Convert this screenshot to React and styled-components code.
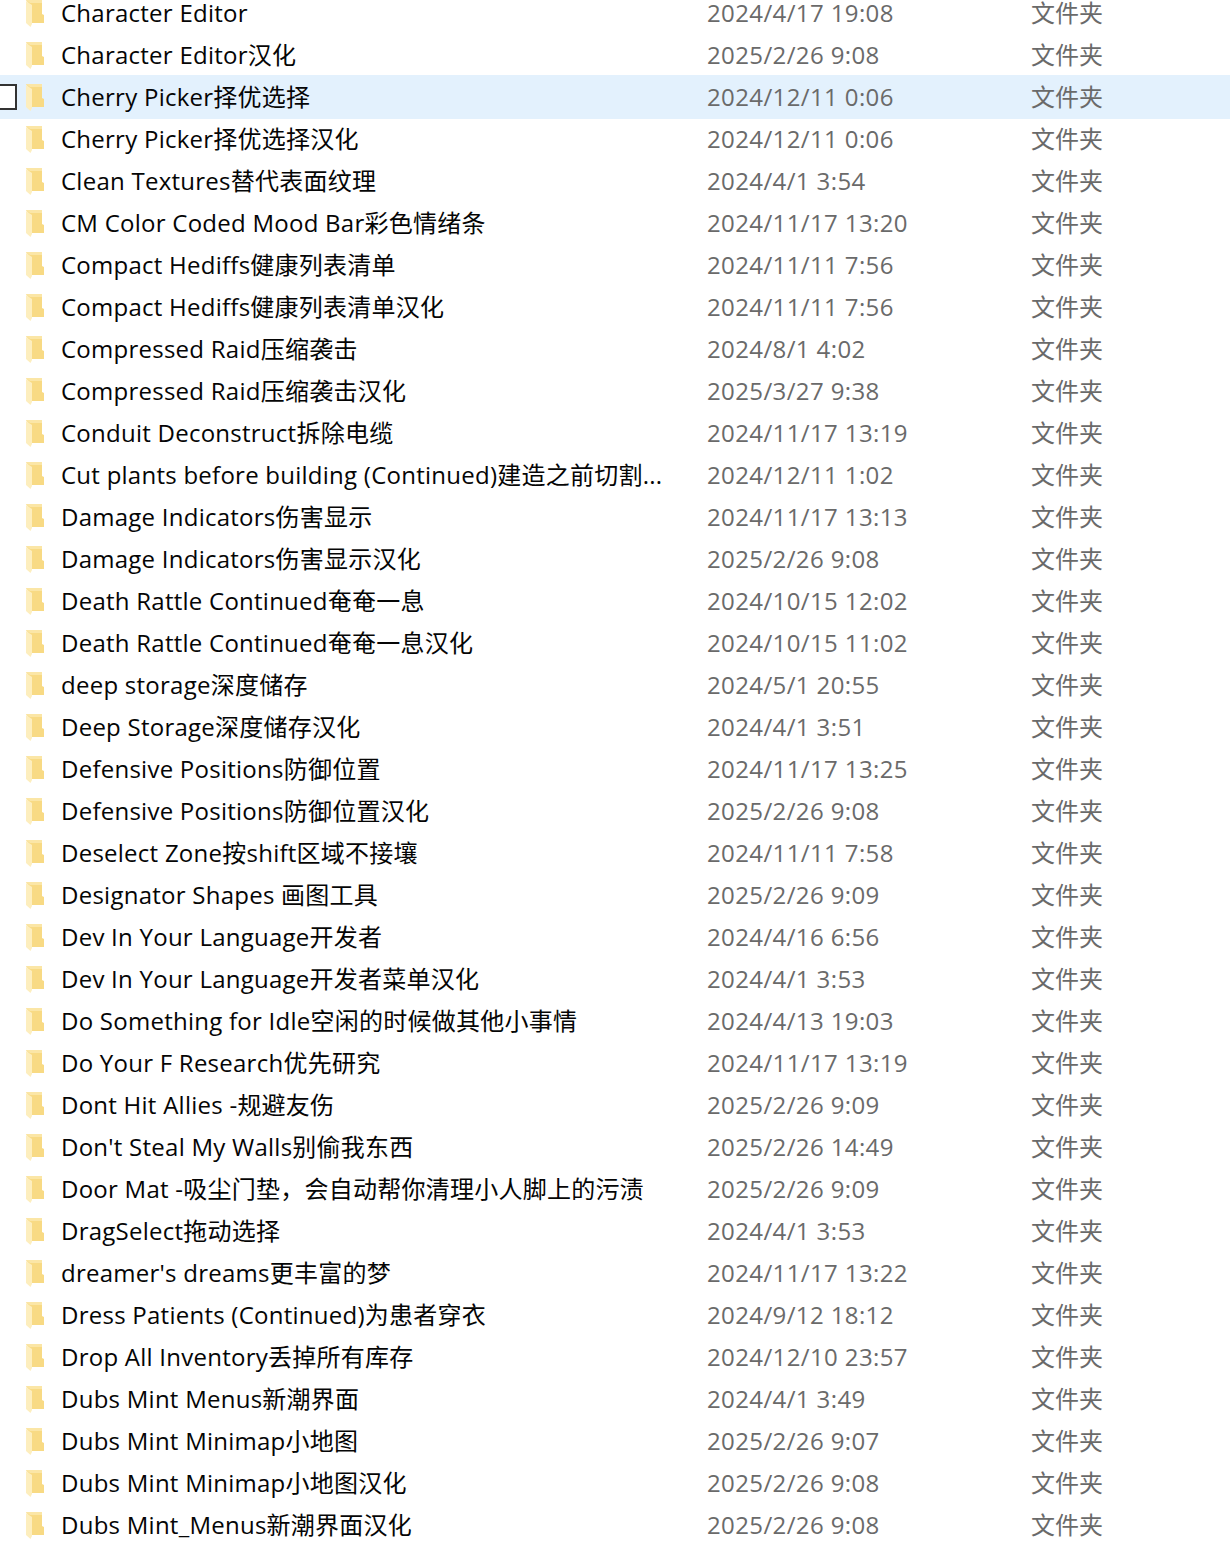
import React from 'react';
import styled, { createGlobalStyle } from 'styled-components';

const GlobalStyle = createGlobalStyle`
    html, body {
        margin: 0;
        padding: 0;
        background: #ffffff;
        overflow: hidden;
    }
`;

const FileList = styled.div`
    width: 1230px;
    height: 1551px;
    overflow: hidden;
    font-family: 'Open Sans', 'Noto Sans CJK SC', sans-serif;
    font-size: 24px;
`;

const Rows = styled.div`
    margin-top: -8px;
    display: flex;
    flex-direction: column;
`;

const Row = styled.div`
    position: relative;
    display: grid;
    grid-template-columns: 26px 35px 646px 324px 1fr;
    align-items: center;
    height: ${p => (p.$selected ? '44px' : '42px')};
    margin: ${p => (p.$selected ? '-1px 0' : '0')};
    background: ${p => (p.$selected ? '#e3f1fd' : 'transparent')};
`;

const Check = styled.span`
    position: absolute;
    left: -8px;
    top: 9px;
    width: 21px;
    height: 22px;
    border: 2px solid #333333;
    background: #ffffff;
`;

const Icon = styled.svg`
    grid-column: 2;
    width: 18px;
    height: 27px;
`;

const Name = styled.span`
    color: #050505;
    white-space: nowrap;
    letter-spacing: 0.25px;
    line-height: 42px;
`;

const DateCell = styled.span`
    color: #6a6a6a;
    white-space: nowrap;
    letter-spacing: 0.38px;
    line-height: 42px;
`;

const TypeCell = styled.span`
    color: #6a6a6a;
    white-space: nowrap;
    line-height: 42px;
`;

const Folder = () => (
    <Icon viewBox="0 0 18 27">
        <path d="M0 0H16V14L18 15V23H4V5Z" fill="#f8da84" />
        <path d="M0 0H16V3H4Z" fill="#fbe6a6" />
        <path d="M0 1L6 5V24L4.5 27L0 23Z" fill="#fdeebe" />
    </Icon>
);

const files = [
    ['Character Editor', '2024/4/17 19:08'],
    ['Character Editor汉化', '2025/2/26 9:08'],
    ['Cherry Picker择优选择', '2024/12/11 0:06', true],
    ['Cherry Picker择优选择汉化', '2024/12/11 0:06'],
    ['Clean Textures替代表面纹理', '2024/4/1 3:54'],
    ['CM Color Coded Mood Bar彩色情绪条', '2024/11/17 13:20'],
    ['Compact Hediffs健康列表清单', '2024/11/11 7:56'],
    ['Compact Hediffs健康列表清单汉化', '2024/11/11 7:56'],
    ['Compressed Raid压缩袭击', '2024/8/1 4:02'],
    ['Compressed Raid压缩袭击汉化', '2025/3/27 9:38'],
    ['Conduit Deconstruct拆除电缆', '2024/11/17 13:19'],
    ['Cut plants before building (Continued)建造之前切割...', '2024/12/11 1:02'],
    ['Damage Indicators伤害显示', '2024/11/17 13:13'],
    ['Damage Indicators伤害显示汉化', '2025/2/26 9:08'],
    ['Death Rattle Continued奄奄一息', '2024/10/15 12:02'],
    ['Death Rattle Continued奄奄一息汉化', '2024/10/15 11:02'],
    ['deep storage深度储存', '2024/5/1 20:55'],
    ['Deep Storage深度储存汉化', '2024/4/1 3:51'],
    ['Defensive Positions防御位置', '2024/11/17 13:25'],
    ['Defensive Positions防御位置汉化', '2025/2/26 9:08'],
    ['Deselect Zone按shift区域不接壤', '2024/11/11 7:58'],
    ['Designator Shapes 画图工具', '2025/2/26 9:09'],
    ['Dev In Your Language开发者', '2024/4/16 6:56'],
    ['Dev In Your Language开发者菜单汉化', '2024/4/1 3:53'],
    ['Do Something for Idle空闲的时候做其他小事情', '2024/4/13 19:03'],
    ['Do Your F Research优先研究', '2024/11/17 13:19'],
    ['Dont Hit Allies -规避友伤', '2025/2/26 9:09'],
    ["Don't Steal My Walls别偷我东西", '2025/2/26 14:49'],
    ['Door Mat -吸尘门垫，会自动帮你清理小人脚上的污渍', '2025/2/26 9:09'],
    ['DragSelect拖动选择', '2024/4/1 3:53'],
    ["dreamer's dreams更丰富的梦", '2024/11/17 13:22'],
    ['Dress Patients (Continued)为患者穿衣', '2024/9/12 18:12'],
    ['Drop All Inventory丢掉所有库存', '2024/12/10 23:57'],
    ['Dubs Mint Menus新潮界面', '2024/4/1 3:49'],
    ['Dubs Mint Minimap小地图', '2025/2/26 9:07'],
    ['Dubs Mint Minimap小地图汉化', '2025/2/26 9:08'],
    ['Dubs Mint_Menus新潮界面汉化', '2025/2/26 9:08'],
];

const App = () => {
    return (
        <FileList>
            <GlobalStyle />
            <Rows>
                {files.map(([name, date, selected]) => (
                    <Row key={name} $selected={selected}>
                        {selected && <Check />}
                        <Folder />
                        <Name>{name}</Name>
                        <DateCell>{date}</DateCell>
                        <TypeCell>文件夹</TypeCell>
                    </Row>
                ))}
            </Rows>
        </FileList>
    );
};

export default App;
